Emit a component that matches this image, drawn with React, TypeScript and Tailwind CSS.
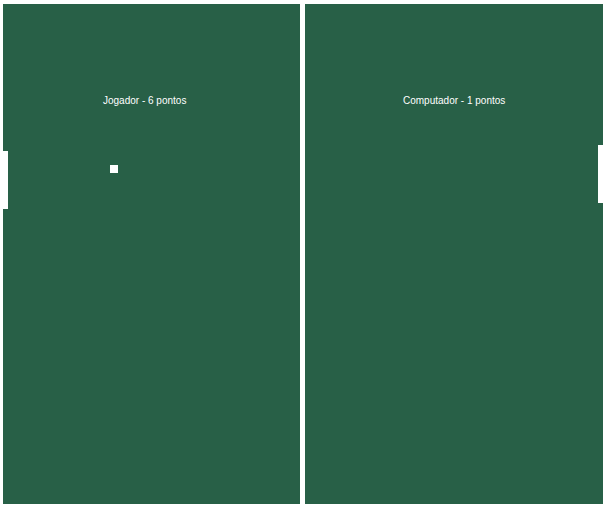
import * as React from "react";

// campo do pong: dois lados, linha central branca, raquetes e bola
const FIELD = "bg-[#286047]";

export default function App() {
  const player = { name: "Jogador", score: 6 };
  const cpu = { name: "Computador", score: 1 };

  return (
    <div className="min-h-screen bg-white pl-[3px] pt-[4px]" style={{ fontFamily: '"Liberation Sans", Arial, sans-serif' }}>
      <div className="relative flex h-[500px] w-[600px]">
        <div className={`${FIELD} w-[297px]`} />
        <div className="w-[5px] bg-white" />
        <div className={`${FIELD} flex-1`} />

        <span className="absolute left-[100px] top-[92px] text-[10px] leading-none text-white">
          {player.name} - {player.score} pontos
        </span>
        <span className="absolute left-[400px] top-[92px] text-[10px] leading-none text-white">
          {cpu.name} - {cpu.score} pontos
        </span>

        {/* raquetes */}
        <div className="absolute left-0 top-[147px] h-[58px] w-[5px] bg-white" />
        <div className="absolute right-0 top-[141px] h-[58px] w-[5px] bg-white" />

        {/* bola */}
        <div className="absolute left-[107px] top-[161px] h-[8px] w-[8px] bg-white" />
      </div>
    </div>
  );
}
